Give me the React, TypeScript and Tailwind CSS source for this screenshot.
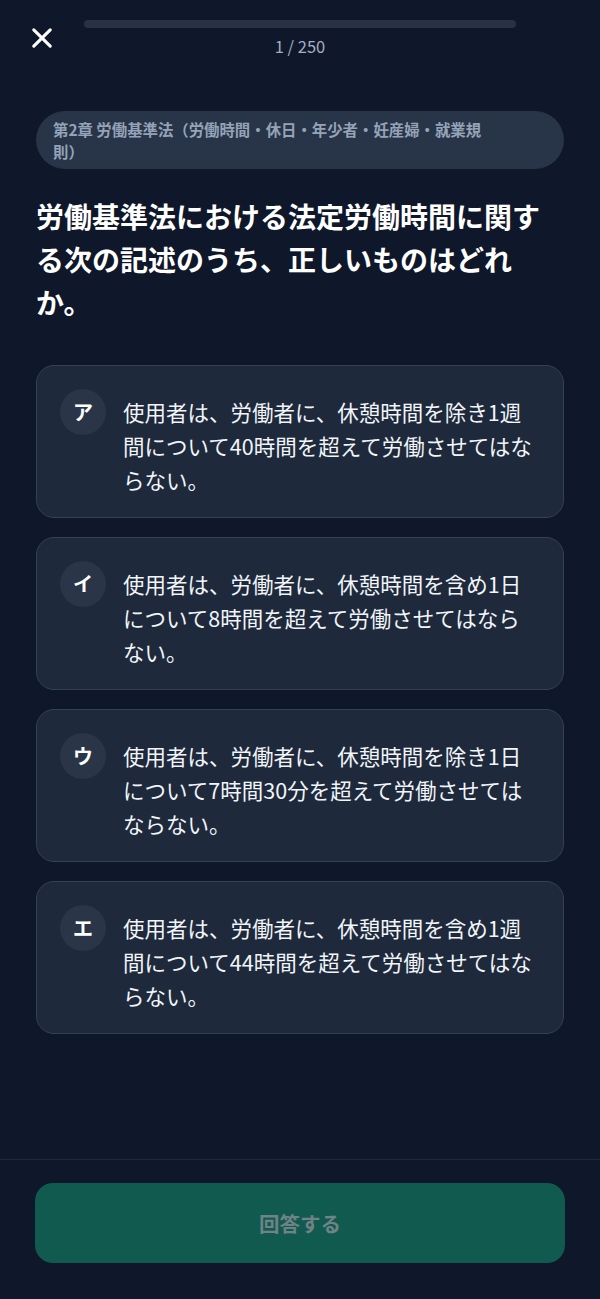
const FONT = { fontFamily: '"Noto Sans CJK JP", "Noto Sans", sans-serif' }

const CHOICES = [
  { label: 'ア', text: '使用者は、労働者に、休憩時間を除き1週間について40時間を超えて労働させてはならない。' },
  { label: 'イ', text: '使用者は、労働者に、休憩時間を含め1日について8時間を超えて労働させてはならない。' },
  { label: 'ウ', text: '使用者は、労働者に、休憩時間を除き1日について7時間30分を超えて労働させてはならない。' },
  { label: 'エ', text: '使用者は、労働者に、休憩時間を含め1週間について44時間を超えて労働させてはならない。' },
]

export default function App() {
  const current = 1
  const total = 250

  return (
    <div className="flex h-[1299px] w-[600px] flex-col bg-[#0f172a] text-white" style={FONT}>
      {/* header */}
      <div className="flex items-start px-[32px] pt-[20px]">
        <button className="mt-[8px] flex h-[20px] w-[20px] items-center justify-center text-white">
          <svg width="22" height="22" viewBox="0 0 22 22" fill="none">
            <path d="M2 2L20 20M20 2L2 20" stroke="currentColor" strokeWidth="3.4" strokeLinecap="round" />
          </svg>
        </button>
        <div className="mx-[32px] flex flex-1 flex-col items-center">
          <div className="h-[8px] w-full rounded-full bg-[#273244]" />
          <div className="mt-[6px] text-[16.5px] leading-[24px] text-[#a3b0c2]">
            {current} / {total}
          </div>
        </div>
        <div className="w-[20px]" />
      </div>

      {/* body */}
      <div className="flex-1 px-[36px] pt-[53px]">
        <div className="rounded-[29px] bg-[#283447] py-[7px] pl-[17px] pr-[70px] text-[15.4px] font-bold leading-[22px] text-[#94a3b8]">
          第2章 労働基準法（労働時間・休日・年少者・妊産婦・就業規則）
        </div>

        <h1 className="mt-[26px] text-[28px] font-bold leading-[43px] text-white">
          労働基準法における法定労働時間に関する次の記述のうち、正しいものはどれか。
        </h1>

        <div className="mt-[41px] flex flex-col gap-[19px]">
          {CHOICES.map((c) => (
            <div
              key={c.label}
              className="flex items-start gap-[17px] rounded-[18px] border border-[#334155] bg-[#1e293b] pb-[20px] pl-[23px] pr-[24px] pt-[23px]"
            >
              <div className="flex h-[46px] w-[46px] shrink-0 items-center justify-center rounded-full bg-[#2a3648] text-[20px] font-bold text-white">
                {c.label}
              </div>
              <p className="flex-1 pt-[6px] text-[21.5px] leading-[34px] text-[#f1f5f9]">{c.text}</p>
            </div>
          ))}
        </div>
      </div>

      {/* footer */}
      <div className="border-t border-[#1e293b] px-[35px] pb-[36px] pt-[23px]">
        <button
          disabled
          className="flex h-[80px] w-full items-center justify-center rounded-[18px] bg-[#115a4f] text-[20.5px] font-bold text-[#6f8285]"
        >
          回答する
        </button>
      </div>
    </div>
  )
}
